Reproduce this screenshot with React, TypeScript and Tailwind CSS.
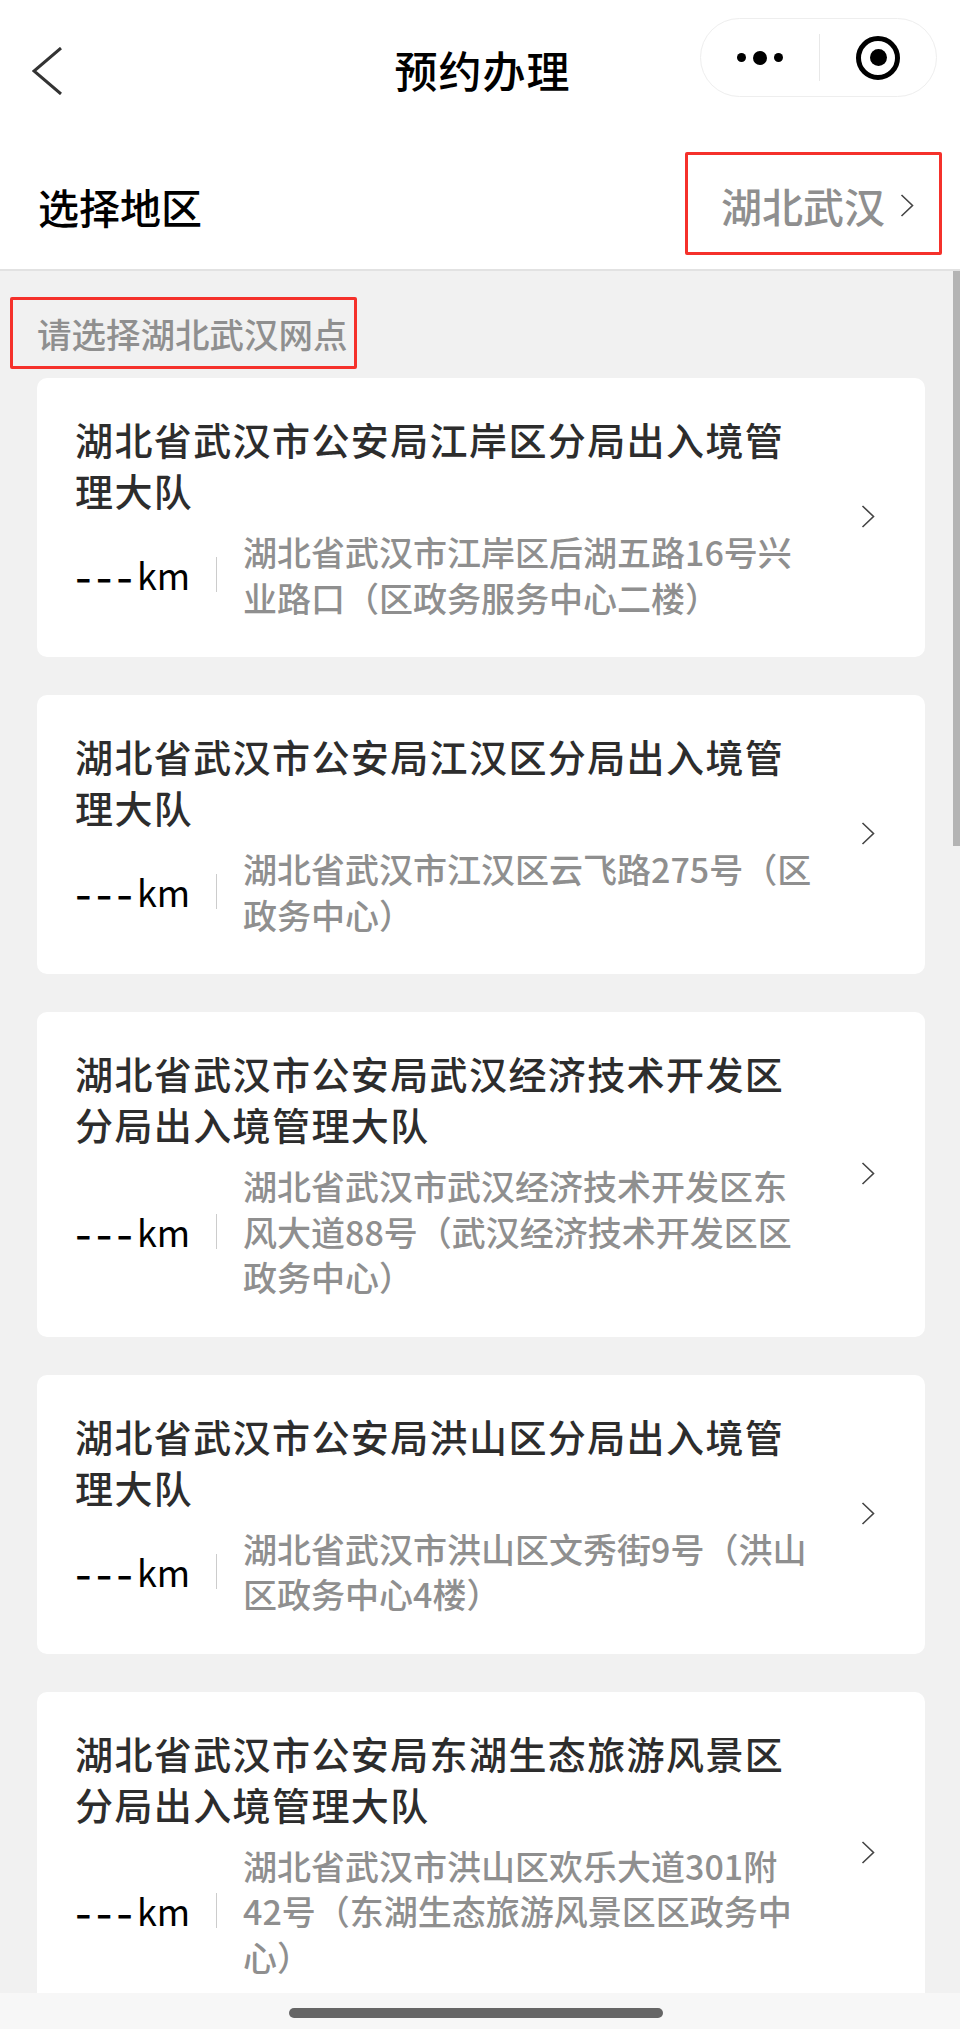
const branches = [
  {
    name: "湖北省武汉市公安局江岸区分局出入境管理大队",
    address: "湖北省武汉市江岸区后湖五路16号兴业路口（区政务服务中心二楼）",
  },
  {
    name: "湖北省武汉市公安局江汉区分局出入境管理大队",
    address: "湖北省武汉市江汉区云飞路275号（区政务中心）",
  },
  {
    name: "湖北省武汉市公安局武汉经济技术开发区分局出入境管理大队",
    address: "湖北省武汉市武汉经济技术开发区东风大道88号（武汉经济技术开发区区政务中心）",
  },
  {
    name: "湖北省武汉市公安局洪山区分局出入境管理大队",
    address: "湖北省武汉市洪山区文秀街9号（洪山区政务中心4楼）",
  },
  {
    name: "湖北省武汉市公安局东湖生态旅游风景区分局出入境管理大队",
    address: "湖北省武汉市洪山区欢乐大道301附42号（东湖生态旅游风景区区政务中心）",
  },
];

function Chevron({ className }: { className: string }) {
  return (
    <svg viewBox="0 0 14 23" className={className} fill="none" stroke="currentColor" strokeWidth="1.6">
      <path d="M1.5 1 L12.5 11.5 L1.5 22" />
    </svg>
  );
}

export default function App() {
  return (
    <div className="flex h-[2029px] w-[960px] flex-col overflow-hidden bg-white font-['Noto_Sans_CJK_SC','Noto_Sans',sans-serif]">
      {/* nav bar */}
      <div className="relative flex h-[110px] shrink-0 items-center justify-center pt-[29px] pl-[5px]">
        <svg viewBox="0 0 30 48" className="absolute left-[32px] top-[47px] h-[48px] w-[30px] text-[#333333]" fill="none" stroke="currentColor" strokeWidth="3">
          <path d="M29 1 L2 24 L29 47" />
        </svg>
        <span className="text-[43px] leading-none font-medium tracking-[1px] text-black">预约办理</span>
        <div className="absolute left-[700px] top-[18px] flex h-[79px] w-[237px] items-center rounded-full border border-[#eeeeee]">
          <div className="flex w-[118px] items-center justify-center gap-[7px]">
            <span className="h-[9px] w-[9px] rounded-full bg-black"></span>
            <span className="h-[14px] w-[14px] rounded-full bg-black"></span>
            <span className="h-[9px] w-[9px] rounded-full bg-black"></span>
          </div>
          <div className="h-[47px] w-px bg-[#e8e8e8]"></div>
          <div className="flex flex-1 items-center justify-center">
            <div className="flex h-[44px] w-[44px] items-center justify-center rounded-full border-[5px] border-black">
              <span className="h-[17px] w-[17px] rounded-full bg-black"></span>
            </div>
          </div>
        </div>
      </div>

      {/* region row */}
      <div className="flex h-[161px] shrink-0 items-start justify-between border-b-2 border-[#e2e2e2] pt-[42px] pr-[18px] pl-[38px]">
        <span className="mt-[24px] text-[41px] leading-[60px] font-medium text-black">选择地区</span>
        <div className="flex h-[103px] w-[257px] items-center gap-[15px] rounded-[2px] border-[3px] border-[#f5312b] pt-[4px] pl-[33px]">
          <span className="text-[41px] leading-none font-medium text-[#8f8f8f]">湖北武汉</span>
          <Chevron className="h-[23px] w-[14px] text-[#444444]" />
        </div>
      </div>

      {/* list */}
      <div className="relative min-h-0 flex-1 overflow-hidden bg-[#f1f1f1]">
        <div className="absolute top-0 right-0 h-[575px] w-[7px] bg-[#b4b4b4]"></div>
        <div className="mt-[26px] ml-[10px] flex h-[72px] w-[347px] items-center rounded-[2px] border-[3px] border-[#f5312b] pl-[24px]">
          <span className="text-[34.5px] leading-none font-medium text-[#8f8f8f]">请选择湖北武汉网点</span>
        </div>
        <div className="mt-[9px] flex flex-col gap-[38px] pr-[35px] pl-[37px]">
          {branches.map((branch) => (
            <div key={branch.name} className="flex items-center rounded-[10px] bg-white pt-[35px] pr-[50px] pb-[37px] pl-[38px]">
              <div className="w-[740px] shrink-0">
                <div className="w-[720px] text-[38px] leading-[51px] font-medium tracking-[1.4px] text-[#2d2d2d]">{branch.name}</div>
                <div className="mt-[14px] flex items-center">
                  <span className="mb-[3px] w-[141px] shrink-0 text-[36px] leading-none text-black">
                    <span className="align-[-4px] text-[48px] tracking-[4px]">---</span>km
                  </span>
                  <div className="h-[35px] w-px shrink-0 bg-[#cccccc]"></div>
                  <div className="ml-[26px] w-[569px] shrink-0 text-[34px] leading-[45.5px] font-medium text-[#8f8f8f]">{branch.address}</div>
                </div>
              </div>
              <Chevron className="ml-auto h-[23px] w-[14px] shrink-0 text-[#444444]" />
            </div>
          ))}
        </div>
      </div>

      {/* home indicator */}
      <div className="flex h-[36px] shrink-0 items-start justify-center bg-[#f7f7f7] pt-[15px] pr-[8px]">
        <div className="h-[10px] w-[374px] rounded-full bg-[#666666]"></div>
      </div>
    </div>
  );
}
